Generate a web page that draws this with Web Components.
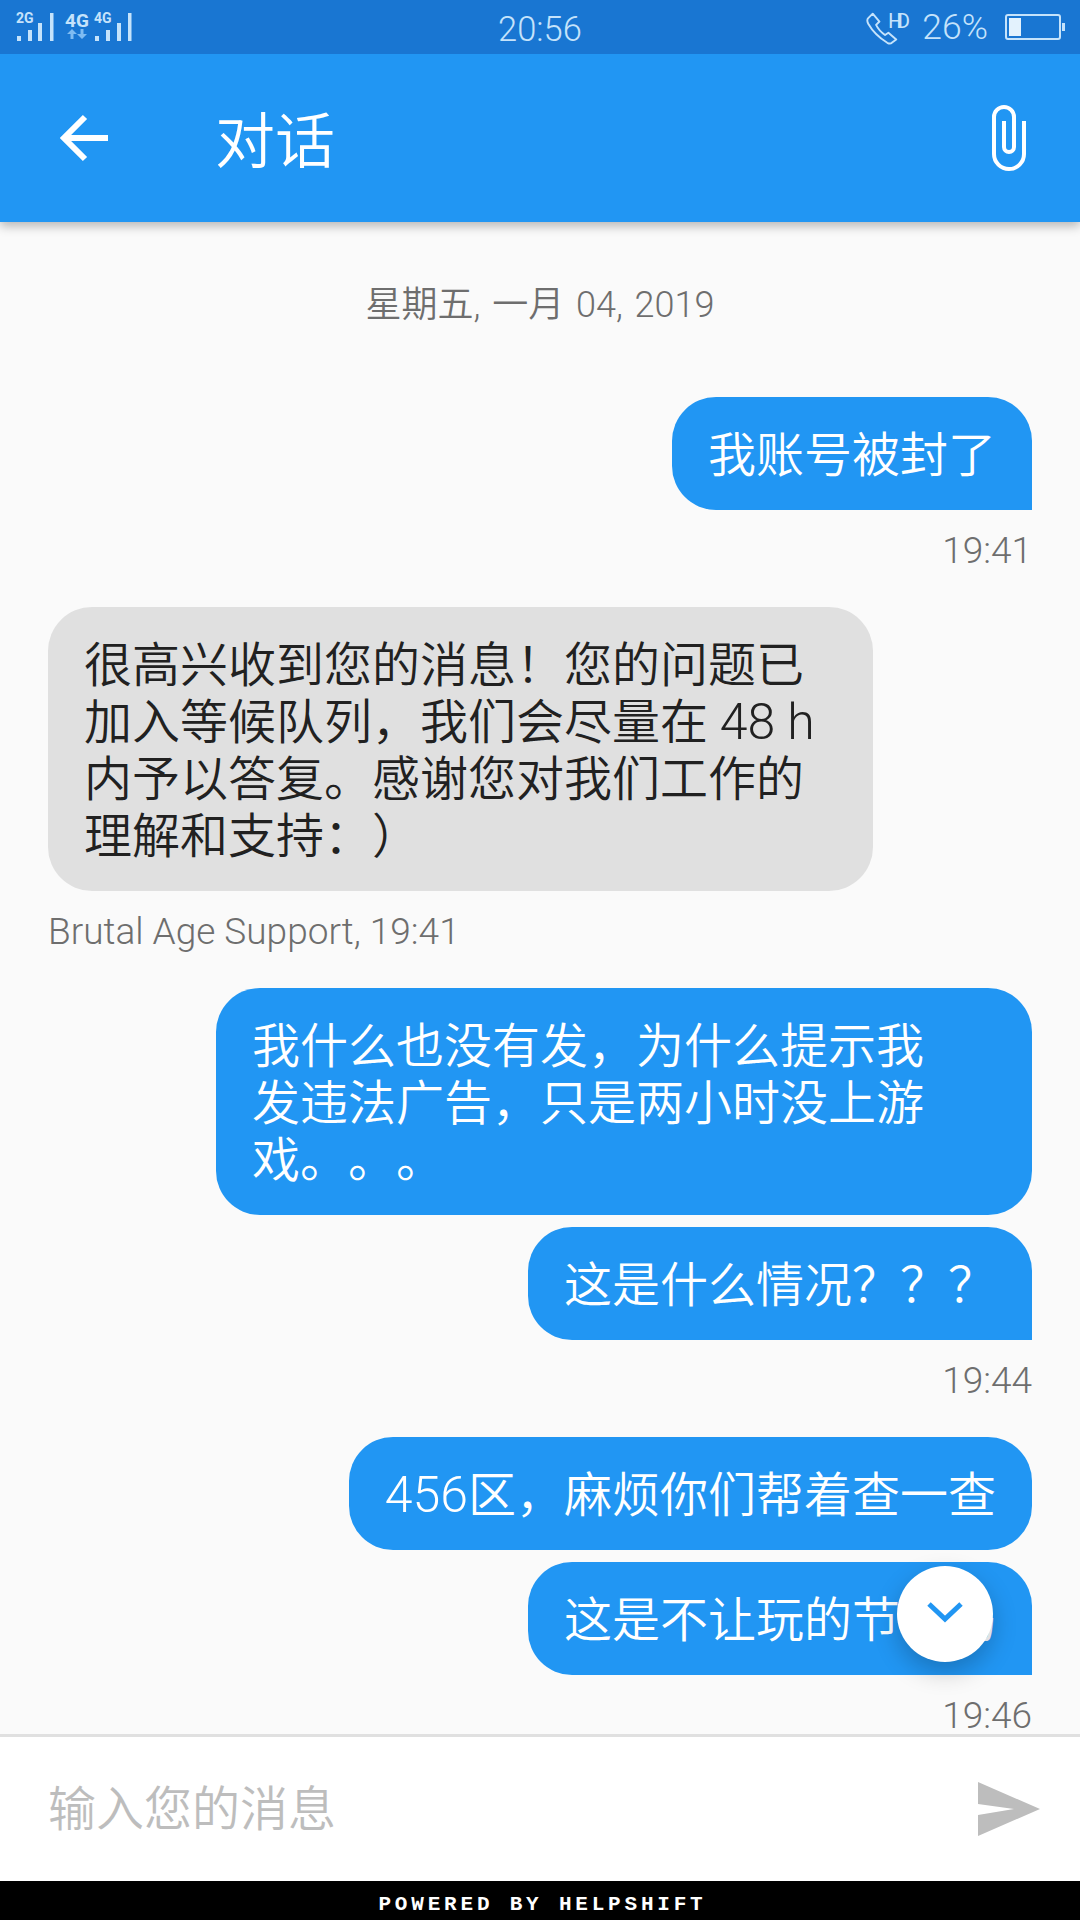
<!DOCTYPE html>
<html lang="zh">
<head>
<meta charset="utf-8">
<title>对话</title>
<style>
    html, body { margin: 0; padding: 0; background: #fafafa; }
    body { font-family: Roboto, "Noto Sans CJK SC", sans-serif; }
</style>
</head>
<body>
<chat-screen>
    <status-bar></status-bar>
    <app-bar>对话</app-bar>
    <chat-view>
        <chat-date>星期五, 一月 04, 2019</chat-date>
        <chat-bubble side="me">我账号被封了</chat-bubble>
        <chat-meta side="me">19:41</chat-meta>
        <chat-bubble side="them" style="width:825px">很高兴收到您的消息！您的问题已<br>加入等候队列，我们会尽量在 <span>48 h</span><br>内予以答复。感谢您对我们工作的<br>理解和支持：）</chat-bubble>
        <chat-meta side="them">Brutal Age Support, 19:41</chat-meta>
        <chat-bubble side="me" round style="width:816px">我什么也没有发，为什么提示我<br>发违法广告，只是两小时没上游<br>戏。。。</chat-bubble>
        <chat-bubble side="me" class="next">这是什么情况？？？</chat-bubble>
        <chat-meta side="me">19:44</chat-meta>
        <chat-bubble side="me" round><span>456</span>区，麻烦你们帮着查一查</chat-bubble>
        <chat-bubble side="me" class="next">这是不让玩的节奏吗</chat-bubble>
        <chat-meta side="me">19:46</chat-meta>
        <scroll-fab></scroll-fab>
    </chat-view>
    <message-input>输入您的消息</message-input>
    <powered-footer>POWERED BY HELPSHIFT</powered-footer>
</chat-screen>

<script>
class ChatScreen extends HTMLElement {
    constructor() {
        super();
        this.attachShadow({ mode: 'open' });
    }
    connectedCallback() {
        this.shadowRoot.innerHTML = `
            <style>
                :host {
                    display: flex;
                    flex-direction: column;
                    width: 1080px;
                    height: 1920px;
                    overflow: hidden;
                    font-family: Roboto, "Noto Sans CJK SC", sans-serif;
                    text-spacing-trim: space-all;
                }
            </style>
            <slot></slot>
        `;
    }
}

class StatusBar extends HTMLElement {
    constructor() {
        super();
        this.attachShadow({ mode: 'open' });
    }
    connectedCallback() {
        this.shadowRoot.innerHTML = `
            <style>
                :host {
                    display: grid;
                    grid-template-columns: 1fr auto 1fr;
                    align-items: center;
                    height: 54px;
                    flex: none;
                    background: #1976d2;
                    color: #c5e3fb;
                    position: relative;
                    z-index: 3;
                }
                .left { display: flex; align-items: center; padding-left: 16px; }
                .right { display: flex; align-items: center; justify-content: flex-end; padding-right: 15px; }
                .clock { font-size: 34.5px; font-weight: 300; padding-top: 4px; }
                .pct { font-size: 35.5px; font-weight: 300; margin: 0 17px 0 11px; }
                svg { display: block; }
                text { font-family: Roboto, sans-serif; fill: #c5e3fb; }
            </style>
            <div class="left">
                <svg width="120" height="54" viewBox="0 0 120 54">
                    <text x="0" y="23" font-size="14" font-weight="700">2G</text>
                    <rect x="1" y="36" width="4" height="5" fill="#c5e3fb"/>
                    <rect x="12" y="30" width="4" height="11" fill="#c5e3fb"/>
                    <rect x="22" y="23" width="4" height="18" fill="#c5e3fb"/>
                    <rect x="34" y="13" width="3.5" height="28" fill="#c5e3fb"/>
                    <text x="49" y="27" font-size="19" font-weight="700">4G</text>
                    <path d="M54.5 39v-5H51l5-5 5 5h-3.5v5z" fill="#7fbcf2"/>
                    <path d="M64.5 29v5H61l5 5 5-5h-3.5v-5z" fill="#7fbcf2"/>
                    <text x="78" y="23" font-size="14" font-weight="700">4G</text>
                    <rect x="79" y="36" width="4" height="5" fill="#c5e3fb"/>
                    <rect x="90" y="30" width="4" height="11" fill="#c5e3fb"/>
                    <rect x="101" y="23" width="4" height="18" fill="#c5e3fb"/>
                    <rect x="112" y="13" width="3.5" height="28" fill="#c5e3fb"/>
                </svg>
            </div>
            <div class="clock">20:56</div>
            <div class="right">
                <svg width="45" height="54" viewBox="-3 0 45 54">
                    <path d="M6 14l-4 4c-1 1-1 3 0 5 4 7 9 12 17 17 2 1 3 1 4 0l4-3-7-6-3 2c-3-2-6-5-8-9l3-3z" transform="translate(-3,-2) scale(1.12)" fill="none" stroke="#c5e3fb" stroke-width="1.7" stroke-linejoin="round"/>
                    <text x="19" y="28" font-size="21" font-weight="400" textLength="22">HD</text>
                </svg>
                <div class="pct">26%</div>
                <svg width="60" height="54" viewBox="0 0 60 54">
                    <rect x="1" y="15" width="54" height="24" rx="2" fill="none" stroke="#c5e3fb" stroke-width="2"/>
                    <rect x="4" y="18" width="12" height="18" fill="#e3f2fd"/>
                    <rect x="57" y="23" width="3" height="8" fill="#c5e3fb"/>
                </svg>
            </div>
        `;
    }
}

class AppBar extends HTMLElement {
    constructor() {
        super();
        this.attachShadow({ mode: 'open' });
    }
    connectedCallback() {
        this.shadowRoot.innerHTML = `
            <style>
                :host {
                    display: flex;
                    align-items: center;
                    height: 168px;
                    flex: none;
                    background: #2196f3;
                    color: #fff;
                    box-shadow: 0 4px 10px rgba(0, 0, 0, .28);
                    position: relative;
                    z-index: 2;
                    padding: 0 54px 0 59px;
                }
                .title {
                    flex: 1;
                    margin-left: 106px;
                    margin-top: -4px;
                    font-size: 60px;
                    font-weight: 350;
                    font-family: "Noto Sans CJK SC", sans-serif;
                }
                svg { display: block; }
            </style>
            <svg width="50" height="50" viewBox="0 0 50 50">
                <path d="M49 25H6M26 4L5 25l21 21" fill="none" stroke="#fff" stroke-width="6"/>
            </svg>
            <div class="title"><slot></slot></div>
            <svg width="34" height="66" viewBox="0 0 34 66">
                <path d="M32 16V49A15 15 0 0 1 2 49V12A10 10 0 0 1 22 12V42A5 5 0 0 1 12 42V16" fill="none" stroke="#fff" stroke-width="4"/>
            </svg>
        `;
    }
}

class ChatView extends HTMLElement {
    constructor() {
        super();
        this.attachShadow({ mode: 'open' });
    }
    connectedCallback() {
        this.shadowRoot.innerHTML = `
            <style>
                :host {
                    display: flex;
                    flex-direction: column;
                    flex: 1;
                    min-height: 0;
                    box-sizing: border-box;
                    padding: 60px 48px 0;
                    background: #fafafa;
                    position: relative;
                }
            </style>
            <slot></slot>
        `;
    }
}

class ChatDate extends HTMLElement {
    constructor() {
        super();
        this.attachShadow({ mode: 'open' });
    }
    connectedCallback() {
        this.shadowRoot.innerHTML = `
            <style>
                :host {
                    display: block;
                    text-align: center;
                    font-size: 36px;
                    font-weight: 350;
                    word-spacing: 3px;
                    line-height: 42px;
                    color: #6e6e6e;
                    padding-top: 2px;
                    margin-bottom: 71px;
                }
            </style>
            <slot></slot>
        `;
    }
}

class ChatBubble extends HTMLElement {
    constructor() {
        super();
        this.attachShadow({ mode: 'open' });
    }
    connectedCallback() {
        const me = this.getAttribute('side') === 'me';
        const round = this.hasAttribute('round');
        const next = this.classList.contains('next');
        let radius = '44px';
        if (me && !round) radius = '44px 44px 0 44px';
        this.shadowRoot.innerHTML = `
            <style>
                :host {
                    display: block;
                    flex: none;
                    box-sizing: border-box;
                    align-self: ${me ? 'flex-end' : 'flex-start'};
                    margin-top: ${next ? '12px' : '0'};
                    padding: 30px 36px 26px;
                    border-radius: ${radius};
                    background: ${me ? '#2196f3' : '#e0e0e0'};
                    color: ${me ? '#fff' : '#212121'};
                    font-size: 48px;
                    font-weight: 350;
                    line-height: 57px;
                    white-space: nowrap;
                }
                ::slotted(span) {
                    font-size: 50px;
                    font-weight: 300;
                    line-height: 0;
                }
            </style>
            <slot></slot>
        `;
    }
}

class ChatMeta extends HTMLElement {
    constructor() {
        super();
        this.attachShadow({ mode: 'open' });
    }
    connectedCallback() {
        const me = this.getAttribute('side') === 'me';
        this.shadowRoot.innerHTML = `
            <style>
                :host {
                    display: block;
                    flex: none;
                    text-align: ${me ? 'right' : 'left'};
                    font-size: 37px;
                    font-weight: 300;
                    line-height: 36px;
                    color: #6e6e6e;
                    margin: 23px 0 38px;
                }
            </style>
            <slot></slot>
        `;
    }
}

class ScrollFab extends HTMLElement {
    constructor() {
        super();
        this.attachShadow({ mode: 'open' });
    }
    connectedCallback() {
        this.shadowRoot.innerHTML = `
            <style>
                :host {
                    position: absolute;
                    left: 897px;
                    top: 1344px;
                    width: 96px;
                    height: 96px;
                    border-radius: 50%;
                    background: #fff;
                    box-shadow: 0 10px 24px rgba(0, 0, 0, .22);
                    display: flex;
                    align-items: center;
                    justify-content: center;
                }
                svg { display: block; margin-top: -4px; }
            </style>
            <svg width="36" height="22" viewBox="0 0 36 22">
                <path d="M2 3l16 15L34 3" fill="none" stroke="#2196f3" stroke-width="5"/>
            </svg>
        `;
    }
}

class MessageInput extends HTMLElement {
    constructor() {
        super();
        this.attachShadow({ mode: 'open' });
    }
    connectedCallback() {
        this.shadowRoot.innerHTML = `
            <style>
                :host {
                    display: flex;
                    align-items: center;
                    justify-content: space-between;
                    height: 147px;
                    flex: none;
                    box-sizing: border-box;
                    background: #fff;
                    border-top: 3px solid #e0e0e0;
                    padding: 0 40px 0 48px;
                    color: #bdbdbd;
                    font-size: 48px;
                    font-weight: 350;
                }
                .hint { margin-top: -9px; }
                svg { display: block; }
            </style>
            <div class="hint"><slot></slot></div>
            <svg width="62" height="54" viewBox="0 0 62 54">
                <path d="M0 0L62 27L0 54V33L36 27L0 22z" fill="#bdbdbd"/>
            </svg>
        `;
    }
}

class PoweredFooter extends HTMLElement {
    constructor() {
        super();
        this.attachShadow({ mode: 'open' });
    }
    connectedCallback() {
        this.shadowRoot.innerHTML = `
            <style>
                :host {
                    display: flex;
                    align-items: center;
                    justify-content: center;
                    height: 39px;
                    padding: 7px 0 0 5px;
                    box-sizing: border-box;
                    flex: none;
                    background: #000;
                    color: #fff;
                    font-family: "Liberation Mono", monospace;
                    font-weight: 700;
                    font-size: 21px;
                    letter-spacing: 3.8px;
                }
            </style>
            <slot></slot>
        `;
    }
}

customElements.define('chat-screen', ChatScreen);
customElements.define('status-bar', StatusBar);
customElements.define('app-bar', AppBar);
customElements.define('chat-view', ChatView);
customElements.define('chat-date', ChatDate);
customElements.define('chat-bubble', ChatBubble);
customElements.define('chat-meta', ChatMeta);
customElements.define('scroll-fab', ScrollFab);
customElements.define('message-input', MessageInput);
customElements.define('powered-footer', PoweredFooter);
</script>
</body>
</html>
